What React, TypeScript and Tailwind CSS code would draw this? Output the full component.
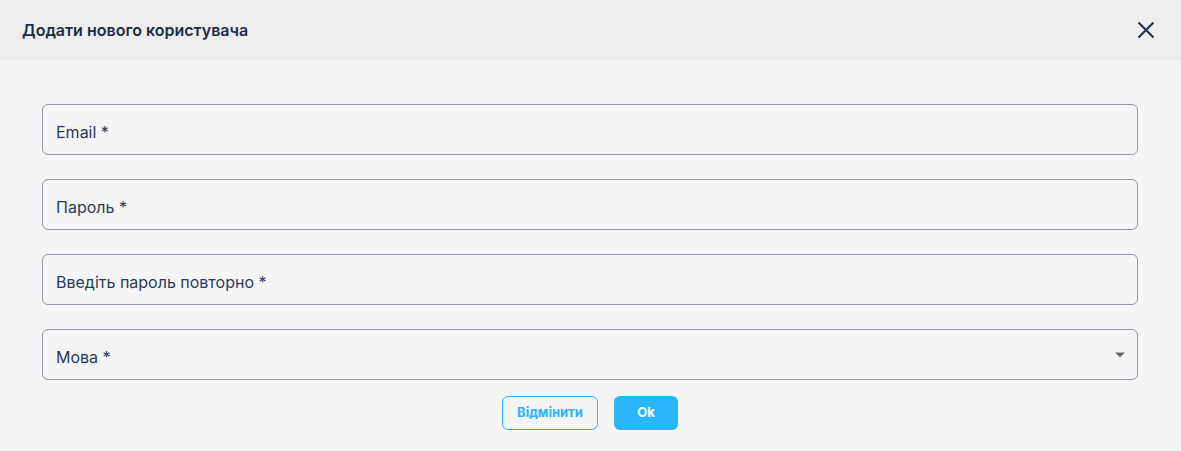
import React from "react";

const Field = ({ label, select }: { label: string; select?: boolean }) => (
  <div className="relative h-[51px] rounded-[6px] border border-[#8f98a8] flex items-center pl-[13px] pt-[5px]">
    <span className="text-[16px] text-[#2a3a58]">{label}</span>
    {select && (
      <svg className="absolute right-[12px] top-[22px]" width="10" height="6" viewBox="0 0 10 5">
        <path d="M0 0 L10 0 L5 5 Z" fill="#6b6b6b" />
      </svg>
    )}
  </div>
);

export default function App() {
  return (
    <div className="w-[1181px] h-[451px] bg-[#f5f5f5] flex flex-col" style={{ fontFamily: "Inter, 'Noto Sans', sans-serif" }}>
      <div className="h-[60px] bg-[#eeeeee] flex items-center justify-between pl-[22px] pr-[26px] border-b border-[#ebebeb]">
        <span className="text-[16px] font-semibold text-[#1e2b45]">Додати нового користувача</span>
        <svg width="18" height="18" viewBox="0 0 18 18">
          <path d="M1.5 1.5 L16.5 16.5 M16.5 1.5 L1.5 16.5" stroke="#1e2f4d" strokeWidth="2" />
        </svg>
      </div>
      <div className="flex flex-col gap-[24px] pl-[42px] pr-[43px] pt-[44px]">
        <Field label="Email *" />
        <Field label="Пароль *" />
        <Field label="Введіть пароль повторно *" />
        <Field label="Мова *" select />
      </div>
      <div className="flex justify-center gap-[16px] mt-[16px] pr-[1px]">
        <button className="w-[96px] h-[34px] rounded-[6px] border border-[#29b6f6] text-[#29b6f6] text-[13px] font-bold">Відмінити</button>
        <button className="w-[64px] h-[34px] rounded-[6px] bg-[#29b6fb] text-white text-[13px] font-bold">Ok</button>
      </div>
    </div>
  );
}
